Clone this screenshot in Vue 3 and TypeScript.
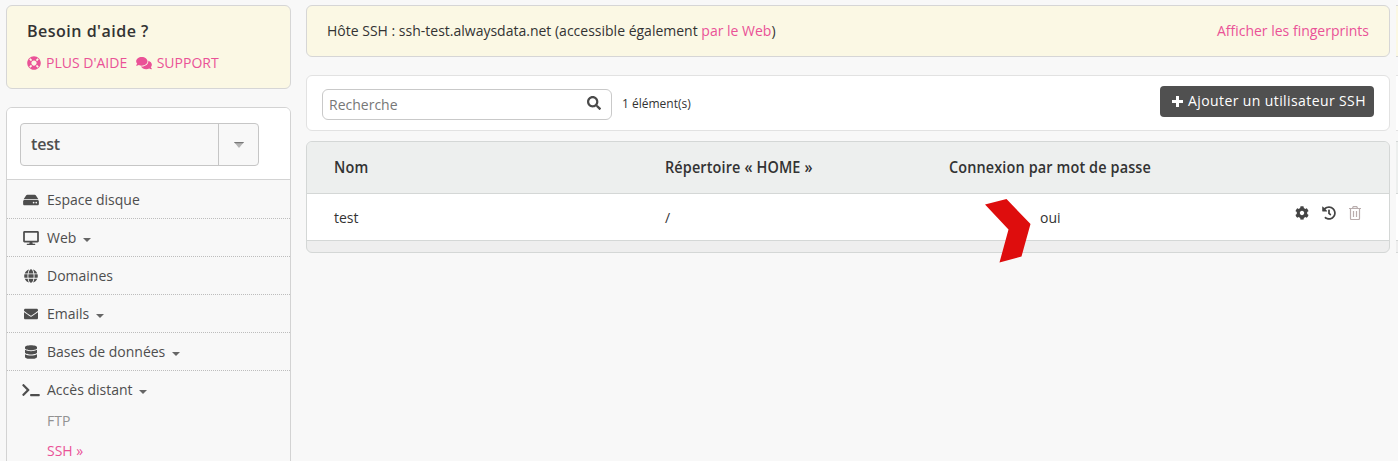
<script setup lang="ts">
interface Icon {
  w: number
  h: number
  d: string
}

interface MenuItem {
  label: string
  icon: Icon
  size: number
  expandable: boolean
}

const lifeRing: Icon = { w: 512, h: 512, d: 'M256 8C119.033 8 8 119.033 8 256s111.033 248 248 248 248-111.033 248-248S392.967 8 256 8zm173.696 119.559l-63.399 63.399c-10.987-18.559-26.67-34.252-45.255-45.255l63.399-63.399a218.396 218.396 0 0 1 45.255 45.255zM256 352c-53.019 0-96-42.981-96-96s42.981-96 96-96 96 42.981 96 96-42.981 96-96 96zM127.559 82.304l63.399 63.399c-18.559 10.987-34.252 26.67-45.255 45.255l-63.399-63.399a218.372 218.372 0 0 1 45.255-45.255zM82.304 384.441l63.399-63.399c10.987 18.559 26.67 34.252 45.255 45.255l-63.399 63.399a218.396 218.396 0 0 1-45.255-45.255zm302.137 45.255l-63.399-63.399c18.559-10.987 34.252-26.67 45.255-45.255l63.399 63.399a218.403 218.403 0 0 1-45.255 45.255z' }
const comments: Icon = { w: 576, h: 512, d: 'M416 192c0-88.400-93.100-160-208-160S0 103.600 0 192c0 34.300 14.100 65.900 38 92-13.400 30.200-35.500 54.200-35.800 54.500-2.200 2.300-2.800 5.700-1.500 8.700S4.800 352 8 352c36.600 0 66.900-12.300 88.700-25 32.200 15.700 70.300 25 111.300 25 114.900 0 208-71.600 208-160zm122 220c23.900-26 38-57.700 38-92 0-66.900-53.500-124.200-129.300-148.100.9 6.600 1.300 13.300 1.300 20.100 0 105.900-107.700 192-240 192-10.800 0-21.300-.8-31.700-1.900C207.800 439.600 281.800 480 368 480c41 0 79.100-9.200 111.300-25 21.800 12.700 52.100 25 88.700 25 3.200 0 6.100-1.900 7.300-4.800 1.300-2.900.7-6.300-1.500-8.700-.3-.3-22.400-24.200-35.800-54.500z' }
const search: Icon = { w: 512, h: 512, d: 'M505 442.700L405.300 343c-4.500-4.500-10.600-7-17-7H372c27.600-35.300 44-79.700 44-128C416 93.100 322.900 0 208 0S0 93.100 0 208s93.100 208 208 208c48.300 0 92.700-16.400 128-44v16.300c0 6.400 2.500 12.500 7 17l99.700 99.700c9.400 9.400 24.600 9.400 33.900 0l28.300-28.300c9.400-9.400 9.400-24.600.1-34zM208 336c-70.700 0-128-57.200-128-128 0-70.700 57.200-128 128-128 70.700 0 128 57.200 128 128 0 70.700-57.200 128-128 128z' }
const gear: Icon = { w: 512, h: 512, d: 'M487.400 315.700l-42.600-24.600c4.300-23.200 4.300-47 0-70.200l42.600-24.600c4.900-2.800 7.100-8.600 5.500-14-11.100-35.600-30-67.800-54.700-94.600-3.800-4.100-10-5.100-14.800-2.300L380.800 110c-17.900-15.400-38.500-27.300-60.800-35.100V25.800c0-5.600-3.900-10.500-9.400-11.700-36.700-8.200-74.300-7.800-109.200 0-5.500 1.200-9.400 6.100-9.400 11.700V75c-22.200 7.900-42.800 19.800-60.800 35.100L88.700 85.500c-4.900-2.800-11-1.900-14.800 2.300-24.700 26.700-43.600 58.900-54.700 94.600-1.700 5.400.6 11.200 5.500 14L67.300 221c-4.300 23.200-4.300 47 0 70.200l-42.600 24.600c-4.900 2.800-7.100 8.600-5.500 14 11.100 35.600 30 67.800 54.700 94.600 3.800 4.100 10 5.100 14.800 2.300l42.600-24.600c17.900 15.400 38.500 27.300 60.800 35.100v49.200c0 5.600 3.900 10.500 9.400 11.700 36.700 8.200 74.300 7.800 109.200 0 5.500-1.200 9.400-6.100 9.400-11.700v-49.200c22.200-7.900 42.800-19.800 60.800-35.100l42.600 24.600c4.900 2.800 11 1.900 14.800-2.300 24.700-26.700 43.600-58.900 54.700-94.600 1.500-5.500-.7-11.300-5.600-14.100zM256 336c-44.100 0-80-35.900-80-80s35.900-80 80-80 80 35.900 80 80-35.900 80-80 80z' }
const history: Icon = { w: 512, h: 512, d: 'M504 255.531c.253 136.640-111.180 248.372-247.820 248.468-59.015.042-113.223-20.530-155.822-54.911-11.077-8.940-11.905-25.541-1.839-35.607l11.267-11.267c8.609-8.609 22.353-9.551 31.891-1.984C173.062 425.135 212.781 440 256 440c101.705 0 184-82.311 184-184 0-101.705-82.311-184-184-184-48.814 0-93.149 18.969-126.068 49.932l50.754 50.754c10.080 10.080 2.941 27.314-11.313 27.314H24c-8.837 0-16-7.163-16-16V38.627c0-14.254 17.234-21.393 27.314-11.314l49.372 49.372C129.209 34.136 189.552 8 256 8c136.810 0 247.747 110.780 248 247.531zm-180.912 78.784l9.823-12.630c8.138-10.463 6.253-25.542-4.210-33.679L288 256.349V152c0-13.255-10.745-24-24-24h-16c-13.255 0-24 10.745-24 24v135.651l65.409 50.874c10.463 8.137 25.541 6.253 33.679-4.210z' }

const hdd: Icon = { w: 576, h: 512, d: 'M576 304v96c0 26.510-21.490 48-48 48H48c-26.510 0-48-21.490-48-48v-96c0-26.510 21.490-48 48-48h480c26.510 0 48 21.490 48 48zm-48-80a79.557 79.557 0 0 1 30.777 6.165L462.250 85.374A48.003 48.003 0 0 0 422.311 64H153.689a48 48 0 0 0-39.938 21.374L17.223 230.165A79.557 79.557 0 0 1 48 224h480zm-48 96c-17.673 0-32 14.327-32 32s14.327 32 32 32 32-14.327 32-32-14.327-32-32-32zm-96 0c-17.673 0-32 14.327-32 32s14.327 32 32 32 32-14.327 32-32-14.327-32-32-32z' }
const desktop: Icon = { w: 576, h: 512, d: 'M528 0H48C21.500 0 0 21.500 0 48v320c0 26.500 21.500 48 48 48h192l-16 48h-72c-13.300 0-24 10.700-24 24s10.700 24 24 24h272c13.300 0 24-10.700 24-24s-10.700-24-24-24h-72l-16-48h192c26.500 0 48-21.500 48-48V48c0-26.500-21.500-48-48-48zm-16 352H64V64h448v288z' }
const globe: Icon = { w: 496, h: 512, d: 'M336.500 160C322 70.700 287.800 8 248 8s-74 62.700-88.500 152h177zM152 256c0 22.200 1.200 43.500 3.300 64h185.300c2.100-20.500 3.300-41.800 3.300-64s-1.200-43.500-3.300-64H155.300c-2.100 20.500-3.300 41.800-3.300 64zm324.700-96c-28.600-67.900-86.500-120.400-158-141.600 24.400 33.800 41.200 84.700 50 141.600h108zM177.200 18.400C105.800 39.600 47.800 92.100 19.300 160h108c8.700-56.900 25.500-107.800 49.900-141.600zM487.400 192H372.700c2.100 21 3.300 42.500 3.300 64s-1.200 43-3.300 64h114.600c5.500-20.500 8.600-41.800 8.600-64s-3.100-43.500-8.500-64zM120 256c0-21.500 1.200-43 3.300-64H8.600C3.200 212.500 0 233.800 0 256s3.200 43.500 8.600 64h114.600c-2-21-3.200-42.500-3.200-64zm39.500 96c14.500 89.300 48.700 152 88.500 152s74-62.700 88.500-152h-177zm159.300 141.600c71.400-21.200 129.400-73.700 158-141.600h-108c-8.800 56.900-25.600 107.800-50 141.600zM19.300 352c28.600 67.900 86.500 120.400 158 141.600-24.400-33.800-41.200-84.700-50-141.600h-108z' }
const envelope: Icon = { w: 512, h: 512, d: 'M502.300 190.800c3.900-3.100 9.700-.2 9.700 4.700V400c0 26.500-21.500 48-48 48H48c-26.500 0-48-21.500-48-48V195.600c0-5 5.700-7.800 9.700-4.700 22.400 17.400 52.100 39.500 154.100 113.600 21.100 15.400 56.700 47.800 92.200 47.600 35.700.3 72-32.800 92.300-47.600 102-74.100 131.600-96.300 154-113.700zM256 320c23.200.4 56.600-29.200 73.400-41.400 132.700-96.300 142.800-104.700 173.400-128.700 5.800-4.500 9.200-11.500 9.200-18.900v-19c0-26.500-21.500-48-48-48H48c-26.500 0-48 21.500-48 48v19c0 7.400 3.400 14.300 9.200 18.900 30.600 23.900 40.700 32.400 173.400 128.700 16.800 12.200 50.200 41.800 73.400 41.400z' }
const database: Icon = { w: 448, h: 512, d: 'M448 73.143v45.714C448 159.143 347.667 192 224 192S0 159.143 0 118.857V73.143C0 32.857 100.333 0 224 0s224 32.857 224 73.143zM448 176v102.857C448 319.143 347.667 352 224 352S0 319.143 0 278.857V176c48.125 33.143 136.208 48.572 224 48.572S399.874 209.143 448 176zm0 160v102.857C448 479.143 347.667 512 224 512S0 479.143 0 438.857V336c48.125 33.143 136.208 48.572 224 48.572S399.874 369.143 448 336z' }
const terminal: Icon = { w: 640, h: 512, d: 'M257.981 272.971L63.638 467.314c-9.373 9.373-24.569 9.373-33.941 0L7.029 444.647c-9.357-9.357-9.375-24.522-.04-33.901L161.011 256 6.990 101.255c-9.335-9.379-9.317-24.544.04-33.901l22.667-22.667c9.373-9.373 24.569-9.373 33.941 0L257.981 239.030c9.373 9.372 9.373 24.568 0 33.941zM640 456v-32c0-13.255-10.745-24-24-24H312c-13.255 0-24 10.745-24 24v32c0 13.255 10.745 24 24 24h304c13.255 0 24-10.745 24-24z' }

const menu: MenuItem[] = [
  { label: 'Espace disque', icon: hdd, size: 16, expandable: false },
  { label: 'Web', icon: desktop, size: 16, expandable: true },
  { label: 'Domaines', icon: globe, size: 14, expandable: false },
  { label: 'Emails', icon: envelope, size: 14, expandable: true },
  { label: 'Bases de données', icon: database, size: 12, expandable: true },
  { label: 'Accès distant', icon: terminal, size: 18, expandable: true },
]
</script>

<template>
  <div class="page">
    <aside class="side">
      <section class="help">
        <h2>Besoin d'aide ?</h2>
        <div class="links">
          <svg width="14" height="14" :viewBox="`0 0 ${lifeRing.w} ${lifeRing.h}`"><path :d="lifeRing.d" /></svg>
          <a class="more">PLUS D'AIDE</a>
          <svg width="16" height="14" :viewBox="`0 0 ${comments.w} ${comments.h}`"><path :d="comments.d" /></svg>
          <a>SUPPORT</a>
        </div>
      </section>
      <nav class="nav">
        <div class="account">
          <div class="select">
            <span class="value">test</span>
            <span class="toggle">
              <svg width="10" height="6" viewBox="0 0 10 6"><path d="M0 0h10L5 6z" fill="#b5b5b5" /><path d="M0 0h10L9 1.300H1z" fill="#777" /></svg>
            </span>
          </div>
        </div>
        <ul>
          <li v-for="m in menu" :key="m.label">
            <span class="ico"><svg :width="m.size" height="14" :viewBox="`0 0 ${m.icon.w} ${m.icon.h}`"><path :d="m.icon.d" /></svg></span>
            <span>{{ m.label }}</span>
            <svg v-if="m.expandable" class="caret" width="8" height="4" viewBox="0 0 8 4"><path d="M0 0h8L4 4z" /></svg>
          </li>
        </ul>
        <div class="sub">FTP</div>
        <div class="sub active">SSH »</div>
      </nav>
    </aside>

    <main class="main">
      <section class="host">
        <span>Hôte SSH : ssh-test.alwaysdata.net (accessible également <a>par le Web</a>)</span>
        <a class="finger">Afficher les fingerprints</a>
      </section>
      <section class="bar">
        <div class="search">
          <span>Recherche</span>
          <svg width="14" height="14" :viewBox="`0 0 ${search.w} ${search.h}`"><path :d="search.d" /></svg>
        </div>
        <span class="count">1 élément(s)</span>
        <button class="add">
          <svg width="11" height="11" viewBox="0 0 11 11"><path d="M4 0h3v4h4v3H7v4H4V7H0V4h4z" /></svg>
          <span>Ajouter un utilisateur SSH</span>
        </button>
      </section>
      <section class="table">
        <div class="row head">
          <span>Nom</span><span class="home">Répertoire « HOME »</span><span class="pass">Connexion par mot de passe</span>
        </div>
        <div class="row body">
          <span>test</span><span>/</span><span class="yes">oui</span>
          <div class="actions">
            <svg width="14" height="14" :viewBox="`0 0 ${gear.w} ${gear.h}`"><path :d="gear.d" /></svg>
            <svg width="14" height="14" :viewBox="`0 0 ${history.w} ${history.h}`"><path :d="history.d" /></svg>
            <svg class="trash" width="12" height="14" viewBox="0 0 12 14"><path d="M0 2.500h12M3.500 2.300L4.300.6h3.400l.8 1.700M1.500 2.700v9.800q0 1 1 1h7q1 0 1-1V2.700M4.500 5v6M7.500 5v6" /></svg>
          </div>
        </div>
        <svg class="arrow" width="46" height="64" viewBox="0 0 46 64"><path d="M0 5.500L21.500 0 45.500 25 36.500 57.500 14.500 63.500 23.500 30.500z" /></svg>
      </section>
    </main>

    <div class="edge">
      <i class="e-host"></i><i class="e-bar"></i><i class="e-head"></i><i class="e-body"></i><i class="e-foot"></i>
    </div>
  </div>
</template>

<style>
body { background: #f8f8f8; }
</style>

<style scoped>
* { box-sizing: border-box; }
.page {
  display: flex;
  height: 461px;
  padding: 5px 0 0 6px;
  overflow: hidden;
  background: #f8f8f8;
  color: #333;
  font: 14px/20px "Open Sans", "Noto Sans", sans-serif;
}
svg { display: block; flex: none; fill: currentColor; }
a { color: #ea5297; }
.side { width: 285px; margin-right: 15px; flex: none; }
.help, .host { background: #fbf8e4; border: 1px solid #d6d6d6; border-radius: 6px; }
.help { height: 84px; padding: 14px 20px 0; }
h2 { margin: 0; font-size: 17px; line-height: 21px; padding-bottom: 1px; font-weight: 600; letter-spacing: .5px; white-space: nowrap; transform: scaleX(.945); transform-origin: 0 0; }
.links { display: flex; align-items: center; margin-top: 11px; gap: 5px; color: #ea5297; white-space: nowrap; }
.links a:last-child { margin-left: -.5px; }
.more { margin-right: 4px; }
.nav {
  height: 400px;
  margin-top: 18px;
  border: 1px solid #d3d3d3;
  border-radius: 6px 6px 0 0;
  color: #4e4e4e;
}
.account { height: 72px; padding: 15px 13px; background: #fff; border-bottom: 1px solid #d3d3d3; border-radius: 5px 5px 0 0; }
.select { display: flex; width: 239px; height: 43px; border: 1px solid #c6c6c6; border-radius: 4px; background: #f8f8f8; }
.value { width: 198px; padding: 10px; border-right: 1px solid #c6c6c6; font-size: 16px; font-weight: 600; letter-spacing: -.2px; }
.toggle { display: flex; flex: 1; align-items: center; justify-content: center; }
ul { margin: 0; padding: 0; list-style: none; }
li { display: flex; align-items: center; height: 38px; padding-top: 1px; border-bottom: 1px dotted #bdbdbd; }
li:first-child { height: 39px; padding-top: 2px; }
li:last-child { height: 37px; border-bottom: 0; }
.ico { display: flex; justify-content: center; width: 20px; margin: 0 6px 0 14px; }
.caret { margin: 4px 0 0 6.500px; color: #666; }
.sub { height: 30px; padding: 3px 0 0 40px; color: #929292; }
.active { color: #ea5297; }
.main { width: 1084px; flex: none; }
.host { display: flex; justify-content: space-between; height: 52px; padding: 15px 20px 0; white-space: nowrap; }
.bar { display: flex; height: 56px; margin-top: 18px; padding: 10px 15px; border: 1px solid #e2e2e2; border-radius: 6px; background: #fff; }
.search { display: flex; justify-content: space-between; width: 290px; height: 31px; margin-top: 3px; padding: 5px 10px 0 6px; border: 1px solid #c9c9c9; border-radius: 6px; color: #777; }
.search svg { color: #4a4a4a; margin-top: 1px; }
.count { margin: 8px auto 0 10px; font-size: 12px; }
.add { display: flex; align-items: center; gap: 5px; width: 214px; height: 31px; padding: 0 0 1px 12px; border: 0; border-radius: 4px; background: #505050; color: #fff; font: inherit; letter-spacing: .4px; white-space: nowrap; }
.table { position: relative; height: 112px; margin-top: 10px; border: 1px solid #d4d7d6; border-radius: 6px; background: #eee; overflow: visible; }
.row { display: grid; grid-template-columns: 331px 284px 1fr; padding-left: 27px; border-bottom: 1px solid #d4d7d6; white-space: nowrap; }
.head { height: 52px; padding-top: 15px; border-radius: 5px 5px 0 0; background: #edefee; font-size: 16px; font-weight: 600; letter-spacing: .15px; }
.head span { transform: scaleX(.902); transform-origin: 0 0; }
.body { height: 47px; padding-top: 14px; background: #fff; grid-template-columns: 331px 375px 1fr auto; }
.actions { display: flex; gap: 13px; padding-right: 28px; margin-top: -2px; color: #444; }
.trash { fill: none; stroke: #b9adad; stroke-width: 1.2; }
.arrow { position: absolute; left: 678px; top: 57px; color: #de0d0d; }
.edge { display: flex; flex-direction: column; width: 2px; margin-left: 6px; }
.edge i { display: block; flex: none; }
.e-host { height: 52px; border: solid #d6d6d6; border-width: 1px 0; background: #fbf8e4; }
.e-bar { height: 56px; margin-top: 18px; border: solid #e2e2e2; border-width: 1px 0; background: #fff; }
.e-head { height: 53px; margin-top: 10px; border: solid #d4d7d6; border-width: 1px 0; background: #edefee; }
.e-body { height: 47px; border-bottom: 1px solid #d4d7d6; background: #fff; }
.e-foot { height: 12px; border-bottom: 1px solid #d4d7d6; background: #eee; }
</style>
